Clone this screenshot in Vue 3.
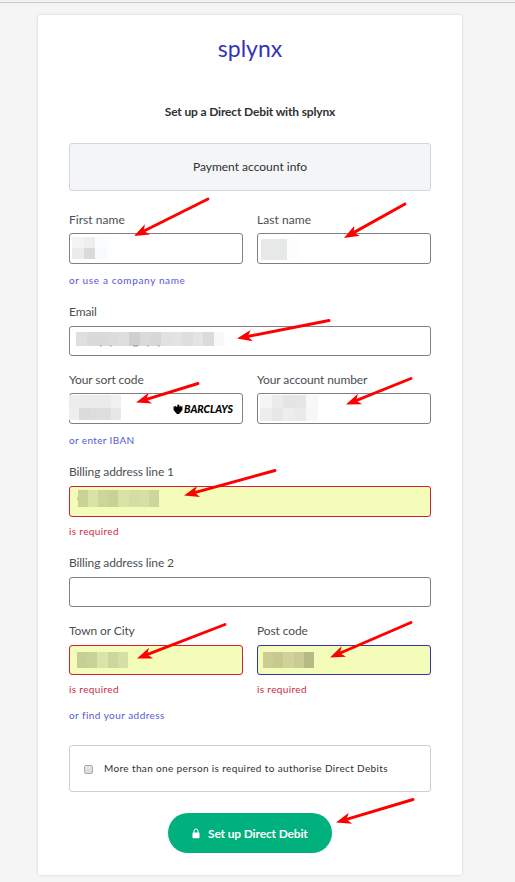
<script setup>
const arrows = [
  [208, 199, 134, 236],
  [405, 204, 344, 238],
  [329, 320.5, 237, 338.5],
  [198, 383.5, 136, 402.5],
  [411, 378.5, 346, 404.5],
  [275, 470.5, 184, 495.5],
  [225, 624.5, 137, 658.5],
  [411, 622.5, 330, 657.5],
  [413, 799.5, 336, 822.5],
].map(([x1, y1, x2, y2]) => ({
  x: x2,
  y: y2,
  length: Math.hypot(x2 - x1, y2 - y1),
  angle: (Math.atan2(y1 - y2, x1 - x2) * 180) / Math.PI,
}))

// Redacted values: x, y, cell width, cell height, colours by row
const mosaics = [
  [72, 237, 11.5, 11, [['#f3f3f2', '#eeeeee', '#fafcfd', '#fefefe'], ['#edebea', '#dadada', '#f8fbfd', '#fefefe']]],
  [261, 239, 12.8, 21, [['#e8e8e8', '#e7e9e8', '#fdfdfd']]],
  [76, 332, 10.6, 14, [['#e1dfdd', '#d9dadb', '#dadada', '#dddcda', '#dedede', '#cfcfcf', '#d9dadb', '#d7d7d8', '#e1e1e1', '#e3e3e3', '#dedede', '#e5e4e1', '#dbdbde', '#f6f8fa']]],
  [69, 395, 10.4, 12.5, [['#ededed', '#ebecec', '#ebebeb', '#eaebec', '#f0f1f1'], ['#eeeeee', '#dbdbdb', '#dedddd', '#dfdddd', '#e6e7e9']]],
  [260, 395, 11.6, 13, [['#f5f5f5', '#ebebeb', '#e5e5e5', '#e6e6e6', '#f8f8f8'], ['#ededed', '#e7e7e7', '#ededed', '#eaeaea', '#f7f7f7']]],
  [78, 490, 10.1, 17, [['#cad395', '#d9e2a7', '#cdd69a', '#c9d295', '#d9e3a7', '#d4dea3', '#d6e0a6', '#cdd79c']]],
  [77, 652, 10.2, 16, [['#c5ce93', '#c9d398', '#dae4a9', '#cdd79c', '#d6e0a6']]],
  [263, 652, 10.2, 16, [['#cdcc92', '#c9c98f', '#cfd29a', '#cccb92', '#b6bb86']]],
].flatMap(([x, y, w, h, rows]) =>
  rows.flatMap((row, r) => row.map((fill, c) => ({ x: x + c * w, y: y + r * h, w, h, fill })))
)
</script>

<template>
  <div class="page">
    <div class="topbar"></div>
    <main class="card">
      <h1>splynx</h1>
      <h2>Set up a Direct Debit with splynx</h2>
      <div class="info">Payment account info</div>

      <div class="row names">
        <div class="field">
          <label>First name</label>
          <div class="input tall"></div>
          <a class="link company">or use a company name</a>
        </div>
        <div class="field">
          <label>Last name</label>
          <div class="input tall"></div>
        </div>
      </div>

      <div class="field email">
        <label>Email</label>
        <div class="input"></div>
      </div>

      <div class="row bank">
        <div class="field">
          <label>Your sort code</label>
          <div class="input tall logo-input">
            <svg class="eagle" viewBox="0 0 18 18">
              <path d="M9 5C7 5 7 2 9 1l3 1-1 1 1 2 2-2 1 2 2-1v7l-2 2-1 2-2 1-1 3-2-1-2 1-1-3-2-1-1-2-2-2V4l2 1 1-2 2 2z" />
            </svg>
            <span class="barclays">BARCLAYS</span>
          </div>
          <a class="link iban">or enter IBAN</a>
        </div>
        <div class="field">
          <label>Your account number</label>
          <div class="input tall"></div>
        </div>
      </div>

      <div class="field line1">
        <label>Billing address line 1</label>
        <div class="input tall filled invalid"></div>
        <p class="error">is required</p>
      </div>

      <div class="field line2">
        <label>Billing address line 2</label>
        <div class="input"></div>
      </div>

      <div class="row town">
        <div class="field">
          <label>Town or City</label>
          <div class="input filled invalid"></div>
          <p class="error">is required</p>
        </div>
        <div class="field">
          <label>Post code</label>
          <div class="input filled focused"></div>
          <p class="error">is required</p>
        </div>
      </div>
      <a class="link find">or find your address</a>

      <div class="authorise">
        <span class="checkbox"></span>
        <span>More than one person is required to authorise Direct Debits</span>
      </div>

      <button class="submit">
        <svg class="lock" viewBox="0 0 8 11">
          <path d="M2 5V3a2 2 0 0 1 4 0v2" fill="none" stroke="#fff" stroke-width="1" />
          <rect x="0.5" y="4.4" width="7" height="5.8" rx="0.6" fill="#fff" />
        </svg>
        <span>Set up Direct Debit</span>
      </button>
    </main>

    <svg class="annotations" width="515" height="882" viewBox="0 0 515 882">
      <g shape-rendering="crispEdges">
        <rect v-for="(m, i) in mosaics" :key="i" :x="m.x" :y="m.y" :width="m.w" :height="m.h" :fill="m.fill" />
      </g>
      <g fill="none" stroke="#8b8d90" stroke-width="1">
        <path d="M100 346h1.5M110 346h1.5M133 345.7q3 1 5 0M147 346h1.5M158 346h1.5" />
      </g>
      <path d="M77.5 497v3" stroke="#f0cf30" />
      <g v-for="(a, i) in arrows" :key="i" :transform="`translate(${a.x} ${a.y}) rotate(${a.angle})`" fill="#f00">
        <path :d="`M10 0H${a.length}`" stroke="#f00" stroke-width="2.9" stroke-linecap="round" />
        <path d="M0 0L15 -5.7L11 0L15 5.7Z" />
      </g>
    </svg>
  </div>
</template>

<style>
body {
  margin: 0;
  background: #f5f5f5;
}
</style>

<style scoped>
.page {
  position: relative;
  box-sizing: border-box;
  width: 515px;
  height: 882px;
  overflow: hidden;
  background: #f5f5f5;
  color: #2e3033;
  font-family: Lato, "Open Sans", sans-serif;
}
.topbar {
  box-sizing: border-box;
  height: 3px;
  background: #f1f1f1;
  border-bottom: 1px solid #cbcbcb;
}
.card {
  display: flex;
  flex-direction: column;
  box-sizing: border-box;
  width: 424px;
  height: 860px;
  margin: 12px 0 0 38px;
  padding: 18px 31px 0;
  background: #fff;
  border-radius: 3px;
  box-shadow: 0 0 3px rgba(0, 0, 0, 0.16);
}
h1 {
  margin: 0;
  line-height: 30px;
  font-size: 23px;
  font-weight: 400;
  letter-spacing: 0;
  text-align: center;
  color: #3634b4;
}
h2 {
  margin: 39px 0 0;
  line-height: 20px;
  font-size: 12px;
  font-weight: 700;
  letter-spacing: -0.15px;
  text-align: center;
}
.info {
  box-sizing: border-box;
  height: 48px;
  margin-top: 21px;
  border: 1px solid #d3d6d9;
  border-radius: 3px;
  background: #f4f5f7;
  line-height: 46px;
  font-size: 12px;
  text-align: center;
}
.row {
  display: grid;
  grid-template-columns: 174px 174px;
  column-gap: 14px;
}
.field {
  display: flex;
  flex-direction: column;
}
label {
  line-height: 20px;
  font-size: 12px;
  letter-spacing: -0.1px;
  color: #4c4e52;
}
.names label {
  letter-spacing: 0.05px;
}
.input {
  box-sizing: border-box;
  height: 30px;
  margin-top: 4px;
  border: 1px solid #7f8082;
  border-radius: 3px;
  background: #fff;
}
.tall {
  height: 31px;
  margin-top: 3px;
}
.filled {
  background: #f3fdb9;
}
.invalid {
  border-color: #d02035;
}
.focused {
  border-color: #3634a8;
}
.link,
.error {
  margin: 6px 0 0;
  line-height: 20px;
  font-size: 10px;
  letter-spacing: 0.36px;
  color: #5757d8;
}
.error {
  margin-top: 4px;
  color: #d02742;
}
.company {
  letter-spacing: 0.64px;
}
.names {
  margin-top: 19px;
}
.email {
  margin-top: 12px;
}
.bank {
  margin-top: 14px;
}
.line1 {
  margin-top: 12px;
}
.line1 .input {
  margin-top: 4px;
}
.line2 {
  margin-top: 12px;
}
.town {
  margin-top: 14px;
}
.find {
  margin-top: 6px;
  letter-spacing: 0.45px;
}
.logo-input {
  display: flex;
  align-items: center;
  justify-content: flex-end;
  gap: 1px;
  padding-right: 9px;
  color: #000;
}
.eagle {
  width: 10px;
  height: 10px;
}
.barclays {
  font-size: 10.5px;
  font-style: italic;
  font-weight: 900;
  line-height: 12px;
}
.authorise {
  display: flex;
  align-items: center;
  box-sizing: border-box;
  height: 47px;
  margin-top: 20px;
  padding: 0 0 2px 14px;
  gap: 11px;
  border: 1px solid #cfcfcf;
  border-radius: 3px;
  font-size: 10px;
  letter-spacing: 0.37px;
  white-space: nowrap;
}
.checkbox {
  box-sizing: border-box;
  width: 9px;
  height: 9px;
  margin-top: 3px;
  border: 1px solid #aaa;
  border-radius: 2px;
  background: linear-gradient(#e8e8e8, #d8d8d8);
}
.submit {
  display: flex;
  align-items: center;
  align-self: center;
  box-sizing: border-box;
  width: 164px;
  height: 40px;
  margin: 21px 0 0;
  padding: 0 0 0 24px;
  gap: 8px;
  border: 0;
  border-radius: 20px;
  background: #00b07d;
  color: #fff;
  font: 700 12px Lato, "Open Sans", sans-serif;
  letter-spacing: -0.15px;
}
.lock {
  width: 8px;
  height: 11px;
}
.annotations {
  position: absolute;
  inset: 0;
  pointer-events: none;
}
</style>
